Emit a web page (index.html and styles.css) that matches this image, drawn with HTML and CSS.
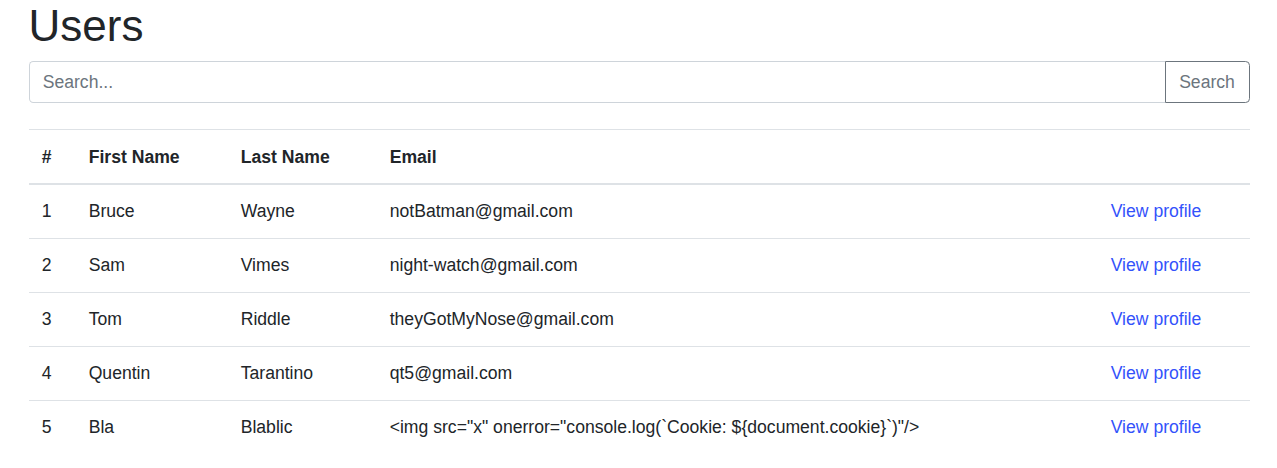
FILE: index.html
```html
<!DOCTYPE html>
<html lang="en">
<head>
<meta charset="utf-8">
<title>Users</title>
<link rel="stylesheet" href="styles.css">
</head>
<body>
<div class="container">
  <h1 class="title">Users</h1>
  <form class="input-group" onsubmit="return false">
    <input class="form-control" type="text" placeholder="Search...">
    <button class="btn-outline" type="submit">Search</button>
  </form>
  <table class="table">
    <thead>
      <tr>
        <th class="c-num">#</th>
        <th class="c-first">First Name</th>
        <th class="c-last">Last Name</th>
        <th class="c-email">Email</th>
        <th class="c-action"></th>
      </tr>
    </thead>
    <tbody>
      <tr><td>1</td><td>Bruce</td><td>Wayne</td><td>notBatman@gmail.com</td><td><a href="#">View profile</a></td></tr>
      <tr><td>2</td><td>Sam</td><td>Vimes</td><td>night-watch@gmail.com</td><td><a href="#">View profile</a></td></tr>
      <tr><td>3</td><td>Tom</td><td>Riddle</td><td>theyGotMyNose@gmail.com</td><td><a href="#">View profile</a></td></tr>
      <tr><td>4</td><td>Quentin</td><td>Tarantino</td><td>qt5@gmail.com</td><td><a href="#">View profile</a></td></tr>
      <tr><td>5</td><td>Bla</td><td>Blablic</td><td>&lt;img src="x" onerror="console.log(`Cookie: ${document.cookie}`)"/&gt;</td><td><a href="#">View profile</a></td></tr>
    </tbody>
  </table>
</div>
</body>
</html>
```
FILE: styles.css
```css
* { box-sizing: border-box; }
html, body { margin: 0; padding: 0; background: #fff; }
body {
  font-family: "Liberation Sans", Arial, Helvetica, sans-serif;
  font-size: 17.6px;
  line-height: 1.5;
  color: #212529;
}
.container {
  width: 1221px;
  margin: 0 auto;
  padding: 0;
  position: relative;
  left: 0.5px;
}
.title {
  margin: 0 0 8.3px 0;
  font-size: 44px;
  font-weight: 500;
  line-height: 1.2;
}
.input-group {
  display: flex;
  margin: 0 0 25.9px 0;
}
.form-control {
  flex: 1 1 auto;
  height: 42px;
  padding: 6.6px 13.2px;
  font: inherit;
  color: #495057;
  border: 1px solid #ced4da;
  border-right: none;
  border-radius: 4.4px 0 0 4.4px;
  outline: none;
  background: #fff;
}
.form-control::placeholder { color: #6c757d; opacity: 1; }
.btn-outline {
  height: 42px;
  padding: 6.6px 13.2px;
  font: inherit;
  color: #6c757d;
  background: transparent;
  border: 1px solid #6c757d;
  border-radius: 0 4.4px 4.4px 0;
  cursor: pointer;
  width: 85px;
}
.table {
  width: 100%;
  border-collapse: collapse;
}
.table th, .table td {
  padding: 12.8px 13.2px 14.2px;
  vertical-align: top;
  border-top: 1px solid #dee2e6;
  text-align: left;
  line-height: 26px;
}
.table thead th {
  padding: 13.6px 13.2px 13.4px;
  font-weight: 700;
  border-bottom: 2px solid #dee2e6;
  vertical-align: bottom;
}
.table tbody tr:first-child td { border-top: none; }
.c-num { width: 47px; }
.c-first { width: 152px; }
.c-last { width: 149px; }
.c-action { width: 152px; }
.table a { color: #3352fb; text-decoration: none; }
```
